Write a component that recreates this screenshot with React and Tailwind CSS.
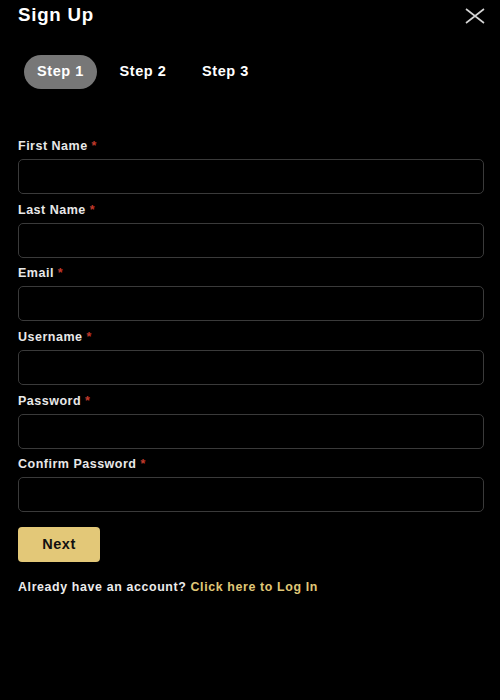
import React from 'react';

const fields = [
  'First Name',
  'Last Name',
  'Email',
  'Username',
  'Password',
  'Confirm Password',
];

const CloseIcon = () => (
  <svg width="20" height="16" viewBox="0 0 20 16" fill="none" stroke="#d4d4d4" strokeWidth="1.6">
    <path d="M1 1 L19 15 M19 1 L1 15" />
  </svg>
);

export default function App() {
  return (
    <div
      className="min-h-[700px] w-[500px] bg-black pl-[18px] pr-[16px] text-white"
      style={{ fontFamily: '"Liberation Sans", Arial, sans-serif' }}
    >
      {/* header */}
      <div className="flex items-center justify-between pt-[1px]">
        <h1 className="text-[18.7px] leading-[28px] font-bold tracking-[0.04em]">Sign Up</h1>
        <button className="mr-[-1px] mt-[1px]">
          <CloseIcon />
        </button>
      </div>

      {/* steps */}
      <div className="mt-[26px] ml-[6px] flex items-center gap-[9.5px]">
        <span className="flex h-[34px] items-center rounded-full bg-[#777777] px-[13px] text-[14.5px] font-bold tracking-[0.04em]">
          Step 1
        </span>
        <span className="flex h-[34px] items-center px-[13px] text-[14.5px] font-bold tracking-[0.04em]">
          Step 2
        </span>
        <span className="flex h-[34px] items-center px-[13px] text-[14.5px] font-bold tracking-[0.04em]">
          Step 3
        </span>
      </div>

      {/* form */}
      <form className="mt-[49px] flex flex-col gap-[7.7px]">
        {fields.map((f) => (
          <div key={f} className="flex flex-col">
            <label className="mb-[5px] text-[12.5px] leading-[16px] font-bold tracking-[0.04em] text-[#e8e8e8]">
              {f} <span className="text-[#c0392b]">*</span>
            </label>
            <input className="h-[35px] w-full rounded-[5px] border border-[#3a3a3a] bg-black px-3 text-sm text-white outline-none" />
          </div>
        ))}
      </form>

      <button className="mt-[15px] h-[35px] w-[82px] rounded-[4px] bg-[#e3c878] text-[14.5px] font-bold tracking-[0.04em] text-[#111]">
        Next
      </button>

      <p className="mt-[17px] text-[12.4px] leading-[16px] font-bold tracking-[0.05em] text-[#ececec]">
        Already have an account? <span className="text-[#e0c878]">Click here to Log In</span>
      </p>
    </div>
  );
}
